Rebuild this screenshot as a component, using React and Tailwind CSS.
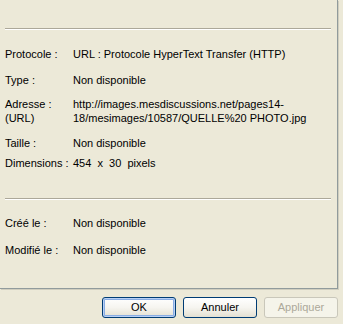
import React from 'react';

const rows1 = [
    { label: 'Protocole :', value: 'URL : Protocole HyperText Transfer (HTTP)', mt: 'mt-[17px]' },
    { label: 'Type :', value: 'Non disponible', mt: 'mt-[12px]' },
    { label: ['Adresse :', '(URL)'], value: ['http://images.mesdiscussions.net/pages14-', '18/mesimages/10587/QUELLE%20 PHOTO.jpg'], mt: 'mt-[10px]' },
    { label: 'Taille :', value: 'Non disponible', mt: 'mt-[11px]' },
    { label: 'Dimensions :', value: '454  x  30  pixels', mt: 'mt-[6px]' },
];

const rows2 = [
    { label: 'Créé le :', value: 'Non disponible', mt: 'mt-[16px]' },
    { label: 'Modifié le :', value: 'Non disponible', mt: 'mt-[13px]' },
];

const Row = ({ label, value, mt }) => (
    <div className={`flex ${mt}`}>
        <div className="w-[68px] shrink-0">
            {[].concat(label).map((l, i) => <div key={i}>{l}</div>)}
        </div>
        <div className="whitespace-pre">
            {[].concat(value).map((v, i) => <div key={i}>{v}</div>)}
        </div>
    </div>
);

const Separator = ({ mt }) => (
    <div className={`${mt} w-[326px]`}>
        <div className="h-px bg-[#ACA899]" />
        <div className="h-px bg-white" />
    </div>
);

const XpButton = ({ children, primary, disabled }) => (
    <button
        className={`w-[74px] h-[21px] rounded-[3px] border text-[11px] leading-none flex items-center justify-center
            ${disabled
                ? 'border-[#C9C7BA] bg-[#F5F4EA] text-[#ACA899]'
                : 'border-[#003C74] bg-gradient-to-b from-white via-[#F6F5F0] to-[#E3E0D2] text-black'}
            ${primary ? 'shadow-[inset_0_0_0_1px_#B8D0F5,inset_0_0_0_2px_#89ADE4]' : ''}`}
    >
        {children}
    </button>
);

export default function App() {
    return (
        <div
            className="w-[343px] h-[324px] bg-[#ECE9D8] text-black text-[11px] leading-[14px] overflow-hidden"
            style={{ fontFamily: '"Liberation Sans", Arial, sans-serif' }}
        >
            {/* Property page */}
            <div className="w-[338px] h-[289px] border-r border-b border-[#919B9C] shadow-[1px_1px_0_#D0CEBF] pl-[5px] pt-[28px]">
                <Separator mt="mt-0" />
                {rows1.map((r, i) => <Row key={i} {...r} />)}
                <Separator mt="mt-[28px]" />
                {rows2.map((r, i) => <Row key={i} {...r} />)}
            </div>

            {/* Dialog buttons */}
            <div className="flex justify-end gap-[7px] pr-[5px] mt-[8px]">
                <XpButton primary>OK</XpButton>
                <XpButton>Annuler</XpButton>
                <XpButton disabled>Appliquer</XpButton>
            </div>
        </div>
    );
}
